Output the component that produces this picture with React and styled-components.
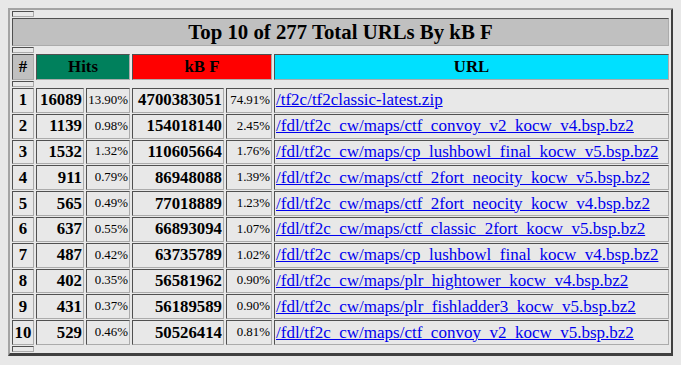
import styled, { createGlobalStyle } from "styled-components";

const rows = [
  [1, 16089, "13.90%", 4700383051, "74.91%", "/tf2c/tf2classic-latest.zip"],
  [2, 1139, "0.98%", 154018140, "2.45%", "/fdl/tf2c_cw/maps/ctf_convoy_v2_kocw_v4.bsp.bz2"],
  [3, 1532, "1.32%", 110605664, "1.76%", "/fdl/tf2c_cw/maps/cp_lushbowl_final_kocw_v5.bsp.bz2"],
  [4, 911, "0.79%", 86948088, "1.39%", "/fdl/tf2c_cw/maps/ctf_2fort_neocity_kocw_v5.bsp.bz2"],
  [5, 565, "0.49%", 77018889, "1.23%", "/fdl/tf2c_cw/maps/ctf_2fort_neocity_kocw_v4.bsp.bz2"],
  [6, 637, "0.55%", 66893094, "1.07%", "/fdl/tf2c_cw/maps/ctf_classic_2fort_kocw_v5.bsp.bz2"],
  [7, 487, "0.42%", 63735789, "1.02%", "/fdl/tf2c_cw/maps/cp_lushbowl_final_kocw_v4.bsp.bz2"],
  [8, 402, "0.35%", 56581962, "0.90%", "/fdl/tf2c_cw/maps/plr_hightower_kocw_v4.bsp.bz2"],
  [9, 431, "0.37%", 56189589, "0.90%", "/fdl/tf2c_cw/maps/plr_fishladder3_kocw_v5.bsp.bz2"],
  [10, 529, "0.46%", 50526414, "0.81%", "/fdl/tf2c_cw/maps/ctf_convoy_v2_kocw_v5.bsp.bz2"],
];

export default function App() {
  return (
    <>
      <GlobalStyle />
      <Table>
        <colgroup>
          <col style={{ width: 22 }} />
          <col style={{ width: 48 }} />
          <col style={{ width: 44 }} />
          <col style={{ width: 92 }} />
          <col style={{ width: 46 }} />
          <col />
        </colgroup>
        <tbody>
          <SpacerRow>
            <Spacer />
          </SpacerRow>
          <TitleRow>
            <Title colSpan={6}>Top 10 of 277 Total URLs By kB F</Title>
          </TitleRow>
          <SpacerRow>
            <Spacer />
          </SpacerRow>
          <HeadRow>
            <Head $bg="#c0c0c0">#</Head>
            <Head $bg="#00805c" colSpan={2}>Hits</Head>
            <Head $bg="#ff0000" colSpan={2}>kB F</Head>
            <Head $bg="#00e0ff">URL</Head>
          </HeadRow>
          <SpacerRow>
            <Spacer />
          </SpacerRow>
          {rows.map(([n, hits, hp, kb, kp, url]) => (
            <DataRow key={n}>
              <Rank>{n}</Rank>
              <Num>{hits}</Num>
              <Pct>{hp}</Pct>
              <Num>{kb}</Num>
              <Pct>{kp}</Pct>
              <UrlCell>
                <Link href="#">{url}</Link>
              </UrlCell>
            </DataRow>
          ))}
          <SpacerRow>
            <Spacer />
          </SpacerRow>
        </tbody>
      </Table>
    </>
  );
}

const GlobalStyle = createGlobalStyle`
  body {
    margin: 8px;
    background: #e8e8e8;
    font-family: "Liberation Serif", "Times New Roman", serif;
    color: #000000;
  }
`;

const Table = styled.table`
  width: 666px;
  table-layout: fixed;
  border-collapse: separate;
  border-spacing: 2px 1px;
  border-style: solid;
  border-width: 2px 3px 3px 2px;
  border-color: #a4a4a4 #404040 #404040 #a4a4a4;
  th,
  td {
    border: 1px solid;
    border-color: #505050 #ababab #ababab #505050;
    padding: 0 1px;
    white-space: nowrap;
    overflow: hidden;
  }
`;

const SpacerRow = styled.tr`
  height: 6px;
`;

const Spacer = styled.th`
  padding: 0;
`;

const TitleRow = styled.tr`
  height: 28px;
`;

const Title = styled.th`
  background: #c0c0c0;
  font-size: 20.8px;
  font-weight: 700;
  text-align: center;
`;

const HeadRow = styled.tr`
  height: 26px;
`;

const Head = styled.th`
  background: ${(p) => p.$bg};
  font-size: 16.8px;
  font-weight: 700;
  text-align: center;
`;

const DataRow = styled.tr`
  height: 24.8px;
`;

const Rank = styled.td`
  font-size: 16.8px;
  font-weight: 700;
  text-align: center;
`;

const Num = styled.td`
  font-size: 16.8px;
  font-weight: 700;
  text-align: right;
`;

const Pct = styled.td`
  font-size: 12.9px;
  text-align: right;
`;

const UrlCell = styled.td`
  font-size: 17px;
  text-align: left;
`;

const Link = styled.a`
  color: #0000ee;
  text-decoration: underline;
`;
